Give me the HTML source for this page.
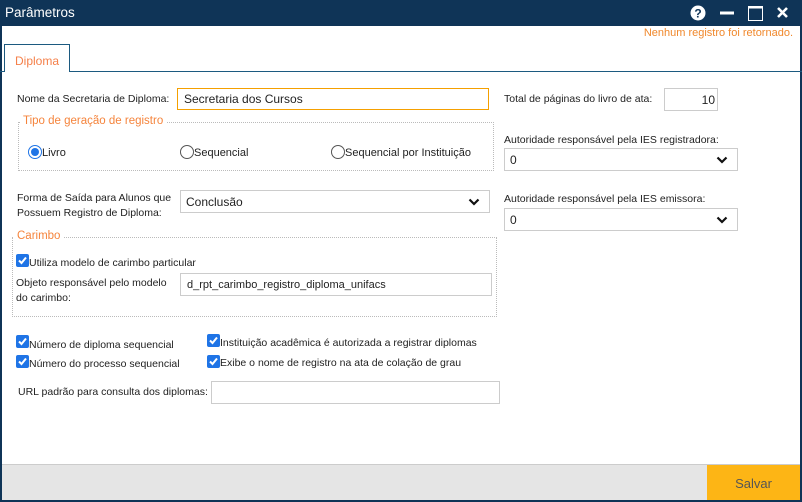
<!DOCTYPE html>
<html><head><meta charset="utf-8"><style>
*{box-sizing:border-box;margin:0;padding:0}
body{width:802px;height:502px;position:relative;overflow:hidden;background:#fff;font-family:"Liberation Sans",sans-serif;font-size:10.5px;color:#222}
.a{position:absolute;white-space:nowrap}
.inp{position:absolute;border:1px solid #ccc;background:#fff;font-size:12px;padding-left:6px;display:flex;align-items:center}
.sel{position:absolute;border:1px solid #ccc;background:#fff;font-size:12px;padding-left:5px;display:flex;align-items:center}
.sel svg{position:absolute;right:9px;top:7px}
.fs{position:absolute;border:1px dotted #bbb}
.lg{position:absolute;background:#fff;color:#f5843c;font-size:11.5px;padding:0 3px}
.cb{position:absolute;width:13px;height:13px;background:#1f74e6;border-radius:2px}
.cb svg{position:absolute;left:1px;top:1px}
.rd{position:absolute;width:14px;height:14px;border:1px solid #555;border-radius:50%;background:#fff}
</style></head><body>
<div class="a" style="left:0;top:0;width:802px;height:26px;background:#0f3457"></div>
<div class="a" style="left:5px;top:5px;color:#fff;font-size:13.5px">Parâmetros</div>
<svg class="a" style="left:688px;top:5px" width="110" height="17">
<circle cx="10" cy="8" r="7.5" fill="#fff"/><text x="10" y="12.5" font-size="12" font-weight="bold" text-anchor="middle" fill="#0f3457" font-family="Liberation Sans">?</text>
<rect x="32" y="6.5" width="14" height="3" fill="#fff"/>
<rect x="60.5" y="1.5" width="14" height="14" fill="none" stroke="#fff" stroke-width="1"/><rect x="60" y="1" width="15" height="2.5" fill="#fff"/>
<path d="M90 3 L99 12 M99 3 L90 12" stroke="#fff" stroke-width="2.6"/>
</svg>
<div class="a" style="left:0;top:26px;width:2px;height:476px;background:#0f3457"></div>
<div class="a" style="right:0;top:26px;width:2px;height:476px;background:#0f3457"></div>
<div class="a" style="left:0;top:500px;width:802px;height:2px;background:#0f3457"></div>
<div class="a" style="right:9px;top:27px;color:#f0882c;font-size:11px">Nenhum registro foi retornado.</div>
<div class="a" style="left:0;top:71px;width:802px;height:1px;background:#1c5a80"></div>
<div class="a" style="left:4px;top:44px;width:66px;height:28px;border:1px solid #1c5a80;border-bottom:none;background:#fff;color:#f5804a;font-size:12px;padding:9px 0 0 10px">Diploma</div>

<div class="a" style="left:17px;top:93px">Nome da Secretaria de Diploma:</div>
<div class="inp" style="left:177px;top:88px;width:312px;height:22px;border-color:#f5a000">Secretaria dos Cursos</div>

<div class="fs" style="left:18px;top:122px;width:476px;height:49px"></div>
<div class="lg" style="left:20px;top:115px">Tipo de geração de registro</div>
<div class="rd" style="left:28px;top:145px;border-color:#1f74e6"><div style="position:absolute;left:2px;top:2px;width:8px;height:8px;border-radius:50%;background:#1f74e6"></div></div>
<div class="a" style="left:42px;top:147px;font-size:11px">Livro</div>
<div class="rd" style="left:180px;top:145px"></div>
<div class="a" style="left:194px;top:147px;font-size:11px">Sequencial</div>
<div class="rd" style="left:331px;top:145px"></div>
<div class="a" style="left:345px;top:147px;font-size:11px">Sequencial por Instituição</div>

<div class="a" style="left:504px;top:93px">Total de páginas do livro de ata:</div>
<div class="inp" style="left:664px;top:88px;width:54px;height:23px;justify-content:flex-end;padding-right:2px">10</div>
<div class="a" style="left:504px;top:134px">Autoridade responsável pela IES registradora:</div>
<div class="sel" style="left:504px;top:148px;width:234px;height:23px">0<svg width="12" height="8"><path d="M1.5 1.5 L6 6 L10.5 1.5" stroke="#111" stroke-width="2.2" fill="none"/></svg></div>
<div class="a" style="left:504px;top:193px">Autoridade responsável pela IES emissora:</div>
<div class="sel" style="left:504px;top:208px;width:234px;height:23px">0<svg width="12" height="8"><path d="M1.5 1.5 L6 6 L10.5 1.5" stroke="#111" stroke-width="2.2" fill="none"/></svg></div>

<div class="a" style="left:17px;top:191px;line-height:15px">Forma de Saída para Alunos que<br>Possuem Registro de Diploma:</div>
<div class="sel" style="left:180px;top:190px;width:310px;height:23px">Conclusão<svg width="12" height="8"><path d="M1.5 1.5 L6 6 L10.5 1.5" stroke="#111" stroke-width="2.2" fill="none"/></svg></div>

<div class="fs" style="left:12px;top:237px;width:485px;height:80px"></div>
<div class="lg" style="left:14px;top:230px">Carimbo</div>
<div class="cb" style="left:16px;top:254px"><svg width="11" height="11"><path d="M2 5.5 L4.5 8 L9 2.5" stroke="#fff" stroke-width="2" fill="none"/></svg></div>
<div class="a" style="left:29px;top:257px">Utiliza modelo de carimbo particular</div>
<div class="a" style="left:16px;top:276px;line-height:15px">Objeto responsável pelo modelo<br>do carimbo:</div>
<div class="inp" style="left:180px;top:273px;width:312px;height:23px;font-size:11px">d_rpt_carimbo_registro_diploma_unifacs</div>

<div class="cb" style="left:16px;top:335px"><svg width="11" height="11"><path d="M2 5.5 L4.5 8 L9 2.5" stroke="#fff" stroke-width="2" fill="none"/></svg></div>
<div class="a" style="left:29px;top:339px">Número de diploma sequencial</div>
<div class="cb" style="left:16px;top:355px"><svg width="11" height="11"><path d="M2 5.5 L4.5 8 L9 2.5" stroke="#fff" stroke-width="2" fill="none"/></svg></div>
<div class="a" style="left:29px;top:358px">Número do processo sequencial</div>
<div class="cb" style="left:207px;top:334px"><svg width="11" height="11"><path d="M2 5.5 L4.5 8 L9 2.5" stroke="#fff" stroke-width="2" fill="none"/></svg></div>
<div class="a" style="left:220px;top:337px">Instituição acadêmica é autorizada a registrar diplomas</div>
<div class="cb" style="left:207px;top:355px"><svg width="11" height="11"><path d="M2 5.5 L4.5 8 L9 2.5" stroke="#fff" stroke-width="2" fill="none"/></svg></div>
<div class="a" style="left:220px;top:357px">Exibe o nome de registro na ata de colação de grau</div>

<div class="a" style="left:18px;top:386px">URL padrão para consulta dos diplomas:</div>
<div class="inp" style="left:211px;top:381px;width:289px;height:23px"></div>

<div class="a" style="left:2px;top:464px;width:798px;height:36px;background:#e5e5e5;border-top:1px solid #ccc"></div>
<div class="a" style="left:707px;top:465px;width:93px;height:35px;background:#fdb515;color:#555;font-size:13px;text-align:center;line-height:37px">Salvar</div>
</body></html>
